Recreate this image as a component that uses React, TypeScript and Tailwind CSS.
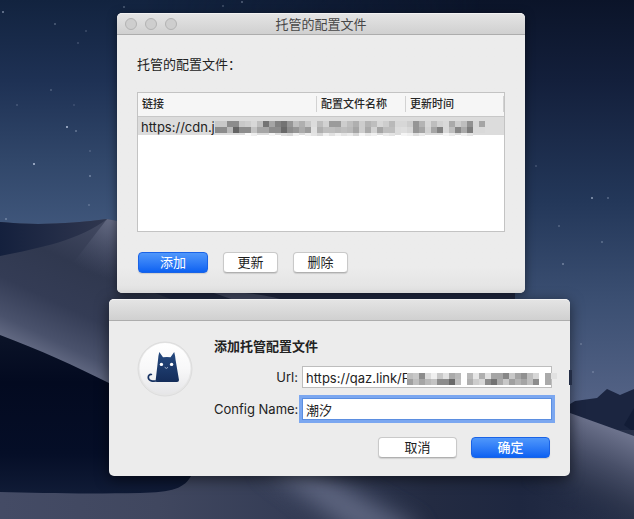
import type { ReactNode } from "react";

type MosaicProps = { rows: number[][]; cell?: number; className: string };

const ROW_MOSAIC: number[][] = [
  [0, 200, 200, 140, 140, 200, 205, 215, 190, 115, 165, 130, 115, 150, 190, 175, 200, 220, 190, 210, 155, 155, 205, 190, 175, 205, 180, 190, 215, 205, 185, 215, 215, 205, 150, 180, 215, 190, 210, 217, 170, 205, 190, 145, 215, 165],
  [0, 140, 140, 185, 100, 140, 140, 195, 165, 165, 140, 140, 105, 140, 150, 170, 155, 225, 175, 190, 190, 185, 190, 185, 165, 205, 170, 210, 165, 190, 190, 220, 222, 215, 150, 165, 210, 165, 130, 217, 190, 135, 170, 125, 217, 217],
  [0, 0, 0, 0, 0, 0, 250, 238, 0, 0, 245, 0, 222, 215, 240, 0, 238, 228, 215, 240, 225, 240, 228, 235, 215, 245, 232, 240, 0, 235, 228, 0, 245, 240, 222, 235, 0, 0, 0, 245, 235, 0, 240, 228, 0, 0],
];

const URL_MOSAIC: number[][] = [
  [0, 190, 200, 140, 220, 240, 200, 225, 170, 185, 0, 185, 230, 175, 225, 165, 165, 135, 200, 165, 145, 190, 215, 0, 170, 225],
  [0, 160, 190, 165, 185, 195, 140, 140, 105, 190, 0, 175, 205, 215, 140, 115, 170, 200, 160, 180, 165, 190, 140, 0, 170, 0],
];

const STARS: [number, number, number][] = [
  [3, 12, 0.5], [55, 24, 0.3], [86, 31, 0.2], [78, 43, 0.2], [51, 90, 0.25], [17, 105, 0.2],
  [67, 127, 0.8], [76, 131, 0.35], [34, 164, 0.8], [90, 176, 0.4], [89, 205, 0.25], [6, 219, 0.35],
  [124, 7, 0.3], [223, 6, 0.25], [242, 2, 0.35], [74, 105, 0.15], [90, 151, 0.2],
  [592, 198, 0.6], [608, 198, 0.3], [536, 166, 0.2], [559, 226, 0.25], [602, 242, 0.3],
  [563, 264, 0.4], [581, 344, 0.25], [593, 372, 0.25],
];

function Mosaic({ rows, cell = 6, className }: MosaicProps) {
  const width = rows[0].length * cell;
  const height = rows.length * cell;
  return (
    <svg aria-hidden="true" className={className} width={width} height={height} shapeRendering="crispEdges">
      {rows.map((row, y) =>
        row.map((v, x) =>
          v ? (
            <rect key={`${x}-${y}`} x={x * cell} y={y * cell} width={cell} height={y === 2 ? 3 : cell} fill={`rgb(${v},${v},${v})`} />
          ) : null,
        ),
      )}
    </svg>
  );
}

function Wallpaper() {
  return (
    <svg aria-hidden="true" className="absolute inset-0 -z-10 h-full w-full" viewBox="0 0 634 519" preserveAspectRatio="xMidYMid slice">
      <defs>
        <linearGradient id="skyRight" gradientUnits="userSpaceOnUse" x1="0" y1="0" x2="0" y2="400">
          <stop offset="0" stopColor="#0b1429" />
          <stop offset="0.2" stopColor="#131f3b" />
          <stop offset="0.5" stopColor="#233759" />
          <stop offset="0.75" stopColor="#3b4f72" />
          <stop offset="1" stopColor="#536285" />
        </linearGradient>
        <linearGradient id="skyLeft" x1="0" y1="0" x2="0" y2="1">
          <stop offset="0" stopColor="#12233f" />
          <stop offset="0.35" stopColor="#1e3154" />
          <stop offset="0.7" stopColor="#31476a" />
          <stop offset="1" stopColor="#40577c" />
        </linearGradient>
        <linearGradient id="fadeX" x1="0" y1="0" x2="1" y2="0">
          <stop offset="0.3" stopColor="#fff" />
          <stop offset="1" stopColor="#000" />
        </linearGradient>
        <mask id="leftMask"><rect width="480" height="230" fill="url(#fadeX)" /></mask>
        <linearGradient id="dune" gradientUnits="userSpaceOnUse" x1="85" y1="222" x2="25" y2="350">
          <stop offset="0" stopColor="#40475f" />
          <stop offset="0.3" stopColor="#30384f" />
          <stop offset="0.6" stopColor="#343c55" />
          <stop offset="0.85" stopColor="#4a526c" />
          <stop offset="1" stopColor="#666d86" />
        </linearGradient>
        <radialGradient id="peak" gradientUnits="userSpaceOnUse" cx="112" cy="218" r="60">
          <stop offset="0" stopColor="#70768e" stopOpacity="0.8" />
          <stop offset="1" stopColor="#454c65" stopOpacity="0" />
        </radialGradient>
        <linearGradient id="back" x1="0" y1="0" x2="1" y2="0">
          <stop offset="0" stopColor="#14203d" />
          <stop offset="1" stopColor="#30374f" />
        </linearGradient>
        <linearGradient id="shade" x1="0" y1="0" x2="0" y2="1">
          <stop offset="0" stopColor="#0b1328" />
          <stop offset="0.3" stopColor="#030a20" />
          <stop offset="0.75" stopColor="#050e27" />
          <stop offset="1" stopColor="#101b36" />
        </linearGradient>
        <linearGradient id="floor" gradientUnits="userSpaceOnUse" x1="0" y1="0" x2="634" y2="0">
          <stop offset="0" stopColor="#444b65" />
          <stop offset="0.25" stopColor="#40475f" />
          <stop offset="0.45" stopColor="#353d56" />
          <stop offset="0.68" stopColor="#232b42" />
          <stop offset="0.82" stopColor="#1e2740" />
          <stop offset="1" stopColor="#28314a" />
        </linearGradient>
        <linearGradient id="slope" gradientUnits="userSpaceOnUse" x1="612" y1="425" x2="572" y2="512">
          <stop offset="0" stopColor="#707690" />
          <stop offset="0.35" stopColor="#4b526b" />
          <stop offset="0.7" stopColor="#30384f" stopOpacity="0.8" />
          <stop offset="1" stopColor="#232c44" stopOpacity="0" />
        </linearGradient>
        <linearGradient id="slopeFade" gradientUnits="userSpaceOnUse" x1="520" y1="0" x2="580" y2="0">
          <stop offset="0" stopColor="#000" />
          <stop offset="1" stopColor="#fff" />
        </linearGradient>
        <mask id="slopeMask"><rect x="500" y="390" width="134" height="129" fill="url(#slopeFade)" /></mask>
        <filter id="soft" x="-50%" y="-50%" width="200%" height="200%"><feGaussianBlur stdDeviation="12" /></filter>
      </defs>
      <rect width="634" height="519" fill="url(#skyRight)" />
      <rect width="480" height="230" fill="url(#skyLeft)" mask="url(#leftMask)" />
      {STARS.map(([x, y, o]) => (
        <rect key={`${x}-${y}`} x={x - 1} y={y - 1} width="2" height="2" rx="1" fill="#d6e2f5" opacity={o} />
      ))}
      <path d="M560 410L575 401L597 398L607 389L620 395L634 389V450H560Z" fill="#1b2540" />
      <path d="M634 408L624 425L634 432Z" fill="#121c36" />
      <path d="M0 222C40 226 75 223 107 219L117 221C170 250 220 285 290 300L400 450V519H0Z" fill="url(#dune)" />
      <path d="M107 219L117 221C140 235 140 260 130 290L60 280Z" fill="url(#peak)" />
      <path d="M0 222C40 226 75 223 107 219C80 240 40 248 0 256Z" fill="url(#back)" />
      <path d="M120 280H515V310H200Z" fill="#242d47" />
      <path d="M205 290C245 292 270 295 290 302H240Z" fill="#49516b" />
      <path d="M100 430H634V519H0V480Z" fill="url(#floor)" />
      <path d="M260 462L300 462L420 530L400 545L350 530Z" fill="#6d7590" opacity="0.8" filter="url(#soft)" />
      <path d="M500 390L570 413L634 436V519H500Z" fill="url(#slope)" mask="url(#slopeMask)" />
      <path d="M0 335C40 350 75 366 109 383C150 410 200 440 192 474C185 489 172 492 140 493C80 494 40 493 0 492Z" fill="url(#shade)" />
    </svg>
  );
}

function CatIcon() {
  return (
    <svg aria-hidden="true" width="58" height="58" viewBox="0 0 58 58" className="shrink-0">
      <defs>
        <linearGradient id="disc" x1="0" y1="0" x2="0" y2="1">
          <stop offset="0" stopColor="#ffffff" />
          <stop offset="0.5" stopColor="#f8f8f9" />
          <stop offset="1" stopColor="#e6e6e8" />
        </linearGradient>
        <linearGradient id="cat" x1="0" y1="0" x2="0" y2="1">
          <stop offset="0" stopColor="#264a80" />
          <stop offset="1" stopColor="#142c59" />
        </linearGradient>
      </defs>
      <circle cx="29" cy="29" r="27" fill="#e6e6e6" stroke="#dddddd" />
      <circle cx="29" cy="28.5" r="25.5" fill="url(#disc)" />
      <path d="M23.3 12L27 17.3Q31 16.8 34.5 17.3L38.2 12Q39.3 16 39.6 20L43 40Q43 42 41 42H21Q19.5 42 19.7 40L22 20Q22.2 16 23.3 12Z" fill="url(#cat)" />
      <path d="M22 40.5C17 42 12.5 41 12.3 37.5C12.2 35.2 13.7 34.3 15.4 34.5" fill="none" stroke="#183363" strokeWidth="1.7" strokeLinecap="round" />
      <circle cx="25.4" cy="24.4" r="1.7" fill="#fff" />
      <circle cx="35.6" cy="24.4" r="1.7" fill="#fff" />
      <path d="M28.7 27.3L30.4 28.4L32 27.3" fill="none" stroke="#b5c2d8" strokeWidth="0.9" />
    </svg>
  );
}

function PushButton({ children, primary = false, className }: { children: ReactNode; primary?: boolean; className: string }) {
  const look = primary
    ? "border-[#1a63e6] bg-linear-to-b from-[#4f97fb] to-[#0b61f2] text-white"
    : "border-[#c9c9c9] border-b-[#b0b0b0] bg-white text-[#1c1c1c]";
  return (
    <button type="button" className={`flex h-[21px] items-center justify-center rounded-[4px] border pb-0.5 shadow-[0_1px_1px_rgba(0,0,0,0.12)] ${look} ${className}`}>
      {children}
    </button>
  );
}

function TitleBar({ children }: { children?: ReactNode }) {
  return (
    <header className="relative flex h-[22px] items-center justify-center rounded-t-[5px] border-t border-b border-t-[#f2f2f2] border-b-[#adadad] bg-linear-to-b from-[#e4e4e4] to-[#d0d0d0] text-[#474747]">
      {children}
    </header>
  );
}

const LIGHT = "size-3 rounded-full border border-[#b3b3b3] bg-[#cecece]";
const HEAD = "p-0 align-middle font-medium";

export default function App() {
  return (
    <main className="relative isolate flex min-h-screen flex-col gap-1.5 overflow-hidden bg-[#1b2844] py-[13px] pl-[109px] font-['Inter','Noto_Sans_CJK_SC',sans-serif] text-[13px] leading-4 text-[#222222]">
      <Wallpaper />

      <section className="ml-2 w-full max-w-[408px] rounded-[5px] bg-[#ececec] shadow-[0_2px_10px_rgba(0,0,0,0.5)]">
        <TitleBar>
          <div className="absolute left-2 flex gap-2">
            <button type="button" aria-label="关闭" className={LIGHT} />
            <button type="button" aria-label="最小化" className={LIGHT} />
            <button type="button" aria-label="缩放" className={LIGHT} />
          </div>
          <h1>托管的配置文件</h1>
        </TitleBar>
        <div className="rounded-b-[5px] bg-linear-to-b from-[#ececec] from-90% to-[#e2e2e2] px-5 pt-[21px] pb-5">
          <p>托管的配置文件：</p>
          <div className="relative mt-5 h-[140px] border border-[#c3c3c3] bg-white">
            <table className="w-full table-fixed border-collapse text-left">
              <colgroup>
                <col />
                <col className="w-[89px]" />
                <col className="w-[98px]" />
              </colgroup>
              <thead className="h-[23px] border-b border-[#c8c8c8] bg-[#f6f6f6] text-[11px] text-[#262626]">
                <tr>
                  <th scope="col" className={HEAD}><div className="border-r border-[#d2d2d2] pl-1">链接</div></th>
                  <th scope="col" className={HEAD}><div className="border-r border-[#d2d2d2] pl-1">配置文件名称</div></th>
                  <th scope="col" className={HEAD}><div className="border-r border-[#d2d2d2] pl-1">更新时间</div></th>
                </tr>
              </thead>
              <tbody>
                <tr className="h-[18px] bg-[#dcdcdc]">
                  <td colSpan={3} className="p-0 pt-0.5 pl-[3px] align-middle">https://cdn.j</td>
                </tr>
              </tbody>
            </table>
            <Mosaic rows={ROW_MOSAIC} className="absolute top-7 left-[71px]" />
          </div>
          <div className="mt-5 flex gap-[15px] pl-px">
            <PushButton primary className="w-[70px]">添加</PushButton>
            <PushButton className="w-[55px]">更新</PushButton>
            <PushButton className="w-[55px]">删除</PushButton>
          </div>
        </div>
      </section>

      <section className="w-full max-w-[461px] rounded-[5px] bg-[#ececec] shadow-[0_3px_14px_rgba(0,0,0,0.55)]">
        <TitleBar />
        <form className="flex gap-5 pt-[17px] pr-[18px] pb-[18px] pl-[27px]" onSubmit={(e) => e.preventDefault()}>
          <div className="pt-0.5"><CatIcon /></div>
          <div className="min-w-0 flex-1">
            <h2 className="font-bold">添加托管配置文件</h2>
            <div className="mt-3 grid grid-cols-[84px_1fr] items-center gap-x-1 gap-y-2.5">
              <label htmlFor="url" className="text-right whitespace-nowrap">Url:</label>
              <div className="relative">
                <input id="url" type="text" defaultValue="https://qaz.link/F" className="block h-[22px] w-full border border-[#bdbdbd] bg-white pt-0.5 pl-[3px] outline-none" />
                <Mosaic rows={URL_MOSAIC} className="absolute top-[7px] left-[99px]" />
                <span aria-hidden="true" className="absolute top-1 -right-5 h-[15px] w-[3px] bg-[#232d45]" />
              </div>
              <label htmlFor="config" className="text-right whitespace-nowrap">Config Name:</label>
              <input id="config" type="text" defaultValue="潮汐" className="block h-[22px] w-full border border-[#5b8ee0] bg-white pl-[3px] ring-3 ring-[#7ba7f0] outline-none" />
            </div>
            <div className="mt-[17px] flex justify-end gap-3.5 pr-0.5">
              <PushButton className="w-[79px]">取消</PushButton>
              <PushButton primary className="w-[79px] font-medium">确定</PushButton>
            </div>
          </div>
        </form>
      </section>
    </main>
  );
}
